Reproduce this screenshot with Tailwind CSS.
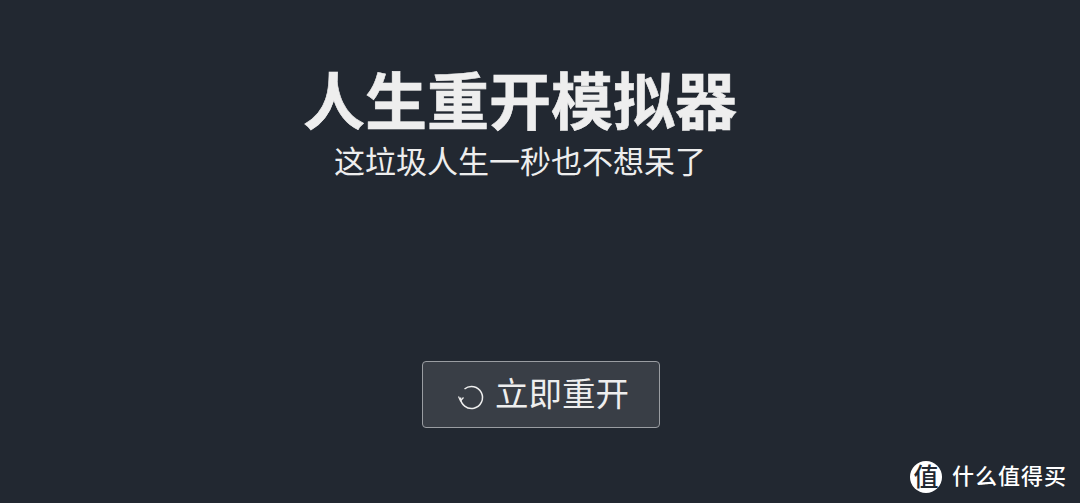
<!DOCTYPE html>
<html lang="zh-CN">
<head>
  <meta charset="UTF-8" />
  <title>人生重开模拟器</title>
  <script src="https://cdn.jsdelivr.net/npm/@tailwindcss/browser@4"></script>
</head>
<body class="relative h-[503px] w-[1080px] overflow-hidden bg-[#222831] font-['Liberation_Sans','Noto_Sans_CJK_SC',sans-serif] text-[#eeeeee]">

  <!-- Title -->
  <div class="flex flex-col items-center pt-[67px] pr-[40px]">
    <h1 class="text-[62px] leading-[74px] font-bold [-webkit-text-stroke:0.6px_#eeeeee]">人生重开模拟器</h1>
    <p class="text-[31px] leading-[44px]">这垃圾人生一秒也不想呆了</p>
  </div>

  <!-- Restart button -->
  <div class="flex justify-center pt-[176px] pl-[2px]">
    <button class="flex h-[67px] w-[238px] items-center justify-center gap-[12px] rounded-[4px] border border-[#9a9da2] bg-[#393e46] pl-[2px] text-[33.5px]">
      <svg class="h-[28px] w-[28px] overflow-visible" viewBox="-2 -2 28 28" fill="none" stroke="#eeeeee" stroke-width="1.5">
        <path d="M7.5 6A11 11 0 1 1 3.5 14.5" />
        <path d="M1.5 13.5l2 4.5 3-3.5" stroke-width="1.2" />
      </svg>
      <span class="pt-[2px]">立即重开</span>
    </button>
  </div>

  <!-- Watermark -->
  <div class="absolute right-[13px] bottom-[10px] flex items-center gap-[10px]">
    <div class="flex h-[32px] w-[32px] items-center justify-center rounded-full bg-white text-[25px] leading-none font-medium text-[#222831]">值</div>
    <span class="text-[22px] leading-[32px] font-medium tracking-[1px] text-white">什么值得买</span>
  </div>

</body>
</html>
